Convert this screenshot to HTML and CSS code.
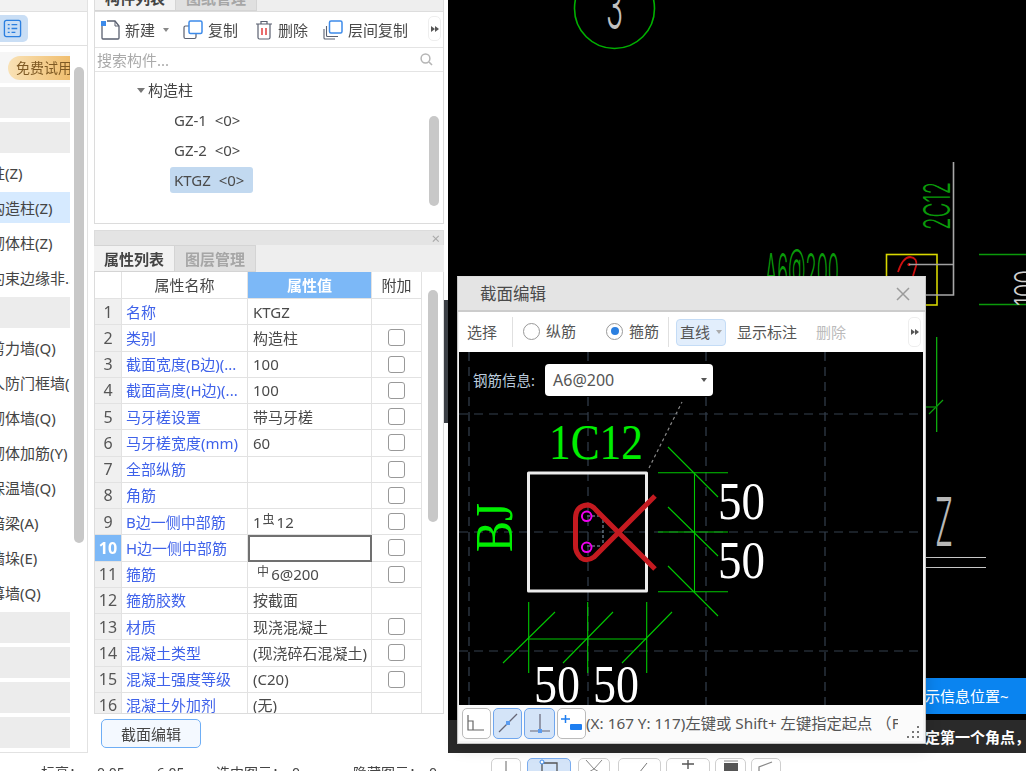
FILE: index.html
```html
<!DOCTYPE html>
<html lang="zh">
<head>
<meta charset="utf-8">
<title>截面编辑</title>
<link rel="stylesheet" href="styles.css">
</head>
<body>
<div class="app">
  <div class="main">
    <aside class="sidebar">
      <div class="side-strip"></div>
      <div class="side-tools">
        <span class="side-toolbtn">
          <svg width="19" height="19" viewBox="0 0 20 20"><rect x="1.5" y="1.5" width="17" height="17" rx="2" fill="none" stroke="#2b7fe0" stroke-width="1.4"/><path d="M5 6h2M9 6h6M5 10h2M9 10h6M5 14h2M9 14h4" stroke="#2b7fe0" stroke-width="1.4"/></svg>
        </span>
      </div>
      <ul class="side-list">
        <li class="side-item"><span class="promo">免费试用</span></li>
        <li class="side-item blank"></li>
        <li class="side-item blank"></li>
        <li class="side-item text"><span>柱(Z)</span></li>
        <li class="side-item text active"><span>构造柱(Z)</span></li>
        <li class="side-item text"><span>砌体柱(Z)</span></li>
        <li class="side-item text"><span>约束边缘非..</span></li>
        <li class="side-item blank"></li>
        <li class="side-item text"><span>剪力墙(Q)</span></li>
        <li class="side-item text"><span>人防门框墙(</span></li>
        <li class="side-item text"><span>砌体墙(Q)</span></li>
        <li class="side-item text"><span>砌体加筋(Y)</span></li>
        <li class="side-item text"><span>保温墙(Q)</span></li>
        <li class="side-item text"><span>暗梁(A)</span></li>
        <li class="side-item text"><span>墙垛(E)</span></li>
        <li class="side-item text"><span>幕墙(Q)</span></li>
        <li class="side-item blank"></li>
        <li class="side-item blank"></li>
        <li class="side-item blank"></li>
        <li class="side-item blank"></li>
      </ul>
      <div class="thumb side-thumb"></div>
    </aside>

    <section class="panels">
      <div class="panel-list">
        <div class="tabs tabs-top">
          <span class="tab current">构件列表</span>
          <span class="tab">图纸管理</span>
        </div>
        <div class="list-tools">
          <span class="tool tool-new">
            <svg width="20" height="20" viewBox="0 0 20 20"><path d="M2 5V18a1 1 0 0 0 1 1H18a1 1 0 0 0 1-1V6L15 1H7" fill="none" stroke="#5a6070" stroke-width="1.3"/><path d="M15 1V6H19" fill="none" stroke="#5a6070" stroke-width="1"/><rect x="1" y="1" width="5" height="5" fill="#3d8bea"/></svg>
            新建<i class="caret"></i>
          </span>
          <span class="tool tool-copy">
            <svg width="20" height="20" viewBox="0 0 20 20"><rect x="1" y="6" width="12" height="12.5" rx="1.5" fill="none" stroke="#5a6070" stroke-width="1.2"/><rect x="6" y="1" width="13" height="12.5" rx="1.5" fill="#fff" stroke="#3d8bea" stroke-width="1.5"/></svg>
            复制
          </span>
          <span class="tool tool-del">
            <svg width="18" height="20" viewBox="0 0 18 20"><path d="M1 4H17M6 4V1.5H12V4" fill="none" stroke="#5a6070" stroke-width="1.2"/><path d="M3 4V17.5a1.5 1.5 0 0 0 1.5 1.5H13.5a1.5 1.5 0 0 0 1.5-1.5V4" fill="none" stroke="#5a6070" stroke-width="1.2"/><path d="M7 8V15M11 8V15" stroke="#e03030" stroke-width="1.4"/></svg>
            删除
          </span>
          <span class="tool tool-floor">
            <svg width="20" height="20" viewBox="0 0 20 20"><path d="M1 9V18a1 1 0 0 0 1 1H12" fill="none" stroke="#5a6070" stroke-width="1.1"/><path d="M3.5 6V15.5a1 1 0 0 0 1 1H15" fill="none" stroke="#5a6070" stroke-width="1.1"/><rect x="6.5" y="1" width="12.5" height="12" rx="1.5" fill="#fff" stroke="#3d8bea" stroke-width="1.5"/></svg>
            层间复制
          </span>
          <span class="more"><i></i><i></i></span>
        </div>
        <div class="search">
          <span>搜索构件...</span>
          <svg width="13" height="13" viewBox="0 0 13 13"><circle cx="5.5" cy="5.5" r="4.4" fill="none" stroke="#b5b5b5" stroke-width="1.5"/><path d="M9 9l3 3" stroke="#b5b5b5" stroke-width="1.6"/></svg>
        </div>
        <div class="tree">
          <div class="tree-root"><i class="caret"></i>构造柱</div>
          <div class="tree-leaf">GZ-1&nbsp; &lt;0&gt;</div>
          <div class="tree-leaf">GZ-2&nbsp; &lt;0&gt;</div>
          <div class="tree-leaf selected">KTGZ&nbsp; &lt;0&gt;</div>
          <div class="thumb tree-thumb"></div>
        </div>
      </div>

      <div class="panel-head"><span class="head-x">×</span></div>
      <div class="tabs tabs-prop">
        <span class="tab current">属性列表</span>
        <span class="tab">图层管理</span>
      </div>
      <div class="prop">
        <div class="grid">
          <div class="c hd num"></div><div class="c hd">属性名称</div><div class="c hd val-hd">属性值</div><div class="c hd">附加</div>

          <div class="c num">1</div><div class="c lbl">名称</div><div class="c val">KTGZ</div><div class="c"></div>
          <div class="c num">2</div><div class="c lbl">类别</div><div class="c val">构造柱</div><div class="c"><i class="chk"></i></div>
          <div class="c num">3</div><div class="c lbl">截面宽度(B边)(...</div><div class="c val">100</div><div class="c"><i class="chk"></i></div>
          <div class="c num">4</div><div class="c lbl">截面高度(H边)(...</div><div class="c val">100</div><div class="c"><i class="chk"></i></div>
          <div class="c num">5</div><div class="c lbl">马牙槎设置</div><div class="c val">带马牙槎</div><div class="c"><i class="chk"></i></div>
          <div class="c num">6</div><div class="c lbl">马牙槎宽度(mm)</div><div class="c val">60</div><div class="c"><i class="chk"></i></div>
          <div class="c num">7</div><div class="c lbl">全部纵筋</div><div class="c val"></div><div class="c"><i class="chk"></i></div>
          <div class="c num">8</div><div class="c lbl">角筋</div><div class="c val"></div><div class="c"><i class="chk"></i></div>
          <div class="c num">9</div><div class="c lbl">B边一侧中部筋</div><div class="c val">1 <span class="steel">虫</span>12</div><div class="c"><i class="chk"></i></div>
          <div class="c num on">10</div><div class="c lbl">H边一侧中部筋</div><div class="c val editing"></div><div class="c"><i class="chk"></i></div>
          <div class="c num">11</div><div class="c lbl">箍筋</div><div class="c val"><span class="steel">&nbsp;中</span>6@200</div><div class="c"><i class="chk"></i></div>
          <div class="c num">12</div><div class="c lbl">箍筋胶数</div><div class="c val">按截面</div><div class="c"></div>
          <div class="c num">13</div><div class="c lbl">材质</div><div class="c val">现浇混凝土</div><div class="c"><i class="chk"></i></div>
          <div class="c num">14</div><div class="c lbl">混凝土类型</div><div class="c val">(现浇碎石混凝土)</div><div class="c"><i class="chk"></i></div>
          <div class="c num">15</div><div class="c lbl">混凝土强度等级</div><div class="c val">(C20)</div><div class="c"><i class="chk"></i></div>
          <div class="c num">16</div><div class="c lbl">混凝土外加剂</div><div class="c val">(无)</div><div class="c"></div>
        </div>
        <div class="thumb prop-thumb"></div>
      </div>
      <div class="prop-foot"><button class="foot-btn">截面编辑</button></div>
    </section>

    <div class="splitter"><span class="grip"></span></div>

    <section class="canvas">
      <svg class="cad" width="578" height="753" viewBox="448 0 578 753">
        <circle cx="614.5" cy="8.5" r="40" fill="none" stroke="#00b000" stroke-width="1.6"/>
        <text class="thin" x="606" y="29" font-size="62" fill="#c0c0c0" textLength="17" lengthAdjust="spacingAndGlyphs">3</text>
        <text class="thin" x="765" y="288" font-size="48" fill="#0a9a0a" textLength="74" lengthAdjust="spacingAndGlyphs">A6@200</text>
        <text class="thin" transform="translate(950 230) rotate(-90)" font-size="37" fill="#0a9a0a" textLength="48" lengthAdjust="spacingAndGlyphs">2C12</text>
        <rect x="886.5" y="254.5" width="50.5" height="50.5" fill="none" stroke="#d8d800" stroke-width="1.6"/>
        <path d="M898 272Q903 257 910 257Q918 258 916 266L913 276" fill="none" stroke="#d01010" stroke-width="1.8"/>
        <circle cx="909" cy="264.5" r="1.6" fill="#e01010"/>
        <path d="M953.5 162V295H925" fill="none" stroke="#a8a8a8" stroke-width="1.6"/>
        <path d="M909 264.5H953" stroke="#a0a0a0" stroke-width="1.4"/>
        <path d="M979 254.5H1026M979 304.5H1026" stroke="#0a9a0a" stroke-width="1.6"/>
        <text class="thin" transform="translate(1036 306) rotate(-90)" font-size="30" fill="#d0d0d0" textLength="36" lengthAdjust="spacingAndGlyphs">100</text>
        <path d="M936.7 337V432" stroke="#10c010" stroke-width="1.2"/>
        <path d="M929 414L943 400" stroke="#0fa00f" stroke-width="1.2"/>
        <path d="M925 407H937" stroke="#0a8a0a" stroke-width="1.4"/>
        <text class="thin" x="935" y="546" font-size="67" fill="#b8b8b8" textLength="18" lengthAdjust="spacingAndGlyphs">Z</text>
        <path d="M925 557.5H986M925 567.5H986" stroke="#c8c8c8" stroke-width="1.2"/>
      </svg>
      <div class="notice">示信息位置~</div>
      <div class="cmdbar">定第一个角点，</div>
    </section>
  </div>

  <footer class="status">
    <span class="st st1">标高：</span><span class="st st2">0.05</span><span class="st st3">~ 6.05</span>
    <span class="st st4">选中图元：</span><span class="st st5">0</span>
    <span class="st st6">隐藏图元：</span><span class="st st7">0</span>
    <span class="sb sb1"><svg width="28" height="14" viewBox="0 0 28 14"><path d="M14 2V14" stroke="#666"/></svg></span>
    <span class="sb sb2 on"><svg width="28" height="14" viewBox="0 0 28 14"><path d="M7 4H22V14M7 4V14" fill="none" stroke="#555" stroke-width="1.3"/><circle cx="7" cy="3" r="2" fill="#fff" stroke="#3d8bea"/></svg></span>
    <span class="sb sb3"><svg width="30" height="14" viewBox="0 0 30 14"><path d="M7 1L15 10L23 1M15 10L8 14M15 10L22 14" fill="none" stroke="#888"/></svg></span>
    <span class="sb sb4"><svg width="30" height="14" viewBox="0 0 30 14"><path d="M14 14L22 4" stroke="#777"/></svg></span>
    <span class="sb sb5"><svg width="30" height="14" viewBox="0 0 30 14"><path d="M9 5H21M15 1V10" stroke="#555" stroke-width="1.4"/></svg></span>
    <span class="sb sb6"><svg width="28" height="14" viewBox="0 0 28 14"><rect x="7" y="4" width="14" height="10" fill="#555"/><path d="M7 2H21" stroke="#888"/></svg></span>
    <span class="sb sb7"><svg width="28" height="14" viewBox="0 0 28 14"><path d="M7 14V8L20 3" fill="none" stroke="#888" stroke-width="1.3"/></svg></span>
  </footer>

  <div class="dialog">
    <div class="dlg-title"><span>截面编辑</span>
      <svg width="14" height="14" viewBox="0 0 14 14"><path d="M1 1L13 13M13 1L1 13" stroke="#9a9a9a" stroke-width="1.5"/></svg>
    </div>
    <div class="dlg-tools">
      <span class="dt-select">选择</span><i class="dsep s1"></i>
      <label class="radio r1"><i class="dot"></i>纵筋</label>
      <label class="radio r2"><i class="dot on"></i>箍筋</label><i class="dsep s2"></i>
      <span class="dt-line">直线<i class="caret"></i></span>
      <span class="dt-show">显示标注</span>
      <span class="dt-del">删除</span>
      <span class="more dt-more"><i></i><i></i></span>
    </div>
    <div class="dlg-canvas">
      <svg width="464" height="353" viewBox="459 352 464 353">
        <g stroke="#34404e" stroke-width="1.2" stroke-dasharray="9 6" fill="none">
          <path d="M459 414H923M459 532H923M459 651H923"/>
          <path d="M469 352V705M588 352V705M706 352V705M825 352V705"/>
        </g>
        <path d="M649 468L682 402" stroke="#888" stroke-width="1.2" stroke-dasharray="3 3"/>
        <text class="serif" x="549" y="459" font-size="51" fill="#00ee00" textLength="94" lengthAdjust="spacingAndGlyphs">1C12</text>
        <text class="serif" transform="translate(512 552) rotate(-90)" font-size="52" fill="#00ee00" textLength="49" lengthAdjust="spacingAndGlyphs">BJ</text>
        <rect x="528.5" y="473" width="118" height="118" fill="none" stroke="#ececec" stroke-width="3" stroke-linejoin="round"/>
        <path d="M603 520V543M587 516H603M587 546H603" stroke="#8fa4b8" stroke-width="1" stroke-dasharray="3 2"/>
        <path d="M655 496L594 557Q587 562 581 558Q575 552 575.5 545V518Q576 506 587 505Q592 505 596 510L655 569" fill="none" stroke="#c41a20" stroke-width="5"/>
        <g fill="none" stroke="#f000f0" stroke-width="2">
          <circle cx="586.7" cy="516.3" r="4.8"/>
          <circle cx="586.7" cy="547.3" r="4.8"/>
        </g>
        <g stroke="#00c800" stroke-width="1.1">
          <path d="M694.5 473V592M658 472.7H728M658 532H728M658 591.7H728"/>
          <path d="M668 447L718 497M668 507L718 556M668 566L718 616"/>
          <path d="M528.7 602V673M587.7 602V673M646.7 602V673M528 639H647"/>
          <path d="M555 612L503 663M613 612L563 663M672 612L622 663"/>
        </g>
        <g class="serif" font-size="52" fill="#fff">
          <text x="718" y="519" textLength="47" lengthAdjust="spacingAndGlyphs">50</text>
          <text x="718" y="578" textLength="47" lengthAdjust="spacingAndGlyphs">50</text>
          <text x="534" y="702" textLength="46" lengthAdjust="spacingAndGlyphs">50</text>
          <text x="593" y="702" textLength="46" lengthAdjust="spacingAndGlyphs">50</text>
        </g>
      </svg>
      <div class="rebar">
        <span class="rebar-lbl">钢筋信息:</span>
        <span class="rebar-sel">A6@200<i class="caret"></i></span>
      </div>
    </div>
    <div class="dlg-foot">
      <span class="fb"><svg width="22" height="18" viewBox="0 0 22 18"><path d="M2 1V16H18M2 7H7V16" fill="none" stroke="#666" stroke-width="1.2"/></svg></span>
      <span class="fb on"><svg width="22" height="22" viewBox="0 0 22 22"><path d="M2 20L20 2" stroke="#667" stroke-width="1.2"/><rect x="9" y="9" width="4" height="4" fill="#5b9cf0"/></svg></span>
      <span class="fb on wide"><svg width="22" height="20" viewBox="0 0 22 20"><path d="M11 1V18M1 18H21" stroke="#667" stroke-width="1.2"/><rect x="9" y="16" width="4" height="4" fill="#5b9cf0"/></svg></span>
      <span class="fb"><svg width="24" height="20" viewBox="0 0 24 20"><path d="M1 6H10M5.5 2V10" stroke="#1e7ef0" stroke-width="1.5"/><rect x="10" y="11" width="12" height="6" rx="1" fill="#1e7ef0"/></svg></span>
      <span class="foot-text">(X: 167 Y: 117)左键或 Shift+ 左键指定起点 （F</span>
      <svg class="size-grip" width="12" height="12" viewBox="0 0 12 12"><g fill="#777"><rect x="10" y="0" width="2" height="2"/><rect x="10" y="5" width="2" height="2"/><rect x="5" y="5" width="2" height="2"/><rect x="10" y="10" width="2" height="2"/><rect x="5" y="10" width="2" height="2"/><rect x="0" y="10" width="2" height="2"/></g></svg>
    </div>
  </div>
</div>
</body>
</html>
```

FILE: styles.css
```css
* { box-sizing: border-box; }
html, body { margin: 0; padding: 0; }
body {
  width: 1026px;
  height: 771px;
  overflow: hidden;
  background: #fff;
  color: #444;
  font: 15px/20px "Noto Sans", "Noto Sans CJK SC", sans-serif;
}
ul { list-style: none; margin: 0; padding: 0; }
i { font-style: normal; }

.app { position: relative; width: 1026px; height: 771px; overflow: hidden; filter: blur(0.35px); }
.main { display: flex; height: 753px; }

/* sidebar */
.sidebar { position: relative; width: 88px; flex: none; border-right: 1px solid #e2e2e2; border-bottom: 1px solid #e2e2e2; background: #fff; }
.side-strip { height: 12px; background: #f2f2f2; border-bottom: 1px solid #e0e0e0; }
.side-tools { height: 34px; border-bottom: 1px solid #e0e0e0; display: flex; align-items: center; }
.side-toolbtn { width: 28px; height: 27px; background: #c9def5; border-radius: 0 5px 5px 0; display: flex; align-items: center; justify-content: flex-end; padding-right: 6px; }
.side-list { padding-top: 6px; display: flex; flex-direction: column; gap: 4px; width: 70px; }
.side-item { height: 31px; overflow: hidden; display: flex; align-items: center; white-space: nowrap; }
.side-item.blank { background: #ececec; }
.side-item.text span { margin-left: -10px; }
.side-item.active { background: #d6eaff; }
.side-item:first-child { background: #f6f6f6; align-items: center; padding-left: 8px; }
.promo { flex: none; width: 70px; height: 24px; padding-left: 8px; font-size: 14px; line-height: 24px; color: #7f5a24; background: linear-gradient(90deg, #f9e2b6, #efb965); border-radius: 12px 0 0 12px; }
.thumb { position: absolute; background: #c8c8c8; border-radius: 5px; width: 10px; }
.side-thumb { left: 74px; top: 67px; height: 476px; }

/* panels */
.panels { width: 350px; margin-left: 6px; flex: none; display: flex; flex-direction: column; }
.panel-list { height: 224px; border: 1px solid #dcdcdc; border-top: 0; display: flex; flex-direction: column; overflow: hidden; }
.tabs { display: flex; background: #eee; flex: none; }
.tabs-top { height: 12px; overflow: hidden; align-items: flex-end; border-bottom: 1px solid #ddd; }
.tabs-top .tab { margin-top: -15px; }
.tab { width: 81px; height: 27px; flex: none; display: flex; align-items: center; justify-content: center; font-weight: 700; color: #a6a6a6; background: #e0e0e0; border: 1px solid #d4d4d4; border-left: 0; font-size: 15px; }
.tab.current { color: #444; background: #f2f2f2; border-right: 1px solid #d4d4d4; }

.list-tools { height: 35px; flex: none; display: flex; align-items: center; position: relative; }
.tool { display: flex; align-items: center; flex: none; gap: 5px; color: #4a4a4a; }
.tool-new { margin-left: 5px; width: 83px; }
.tool-copy { width: 72px; }
.tool-del { width: 68px; }
.caret { display: inline-block; width: 0; height: 0; border-left: 3.5px solid transparent; border-right: 3.5px solid transparent; border-top: 4px solid #888; }
.tool-new .caret { margin-left: 3px; }
.more { position: absolute; right: 2px; top: 4px; width: 13px; height: 25px; border: 1px solid #eee; border-radius: 5px; background: #fff; display: flex; align-items: center; justify-content: center; }
.more i { width: 0; height: 0; border-top: 3px solid transparent; border-bottom: 3px solid transparent; border-left: 4px solid #555; }
.search { height: 25px; flex: none; border-top: 1px solid #e4e4e4; border-bottom: 1px solid #e4e4e4; display: flex; align-items: center; justify-content: space-between; padding: 0 10px 0 2px; color: #aaa; }
.tree { position: relative; flex: 1; padding-top: 3px; }
.tree-root { height: 30px; display: flex; align-items: center; padding-left: 42px; gap: 3px; }
.tree-root .caret { border-top-color: #777; border-left-width: 4px; border-right-width: 4px; border-top-width: 5px; }
.tree-leaf { height: 30px; display: flex; align-items: center; padding-left: 79px; color: #4a4a4a; font-size: 15px; }
.tree-leaf.selected { width: 83px; height: 26px; margin: 2px 0 0 75px; padding-left: 4px; background: #c2d9f0; border-radius: 3px; white-space: nowrap; }
.tree-thumb { left: 334px; top: 44px; height: 90px; }

.panel-head { height: 15px; margin-top: 6px; background: #e4e4e4; flex: none; position: relative; border: 1px solid #dcdcdc; border-bottom: 0; }
.head-x { position: absolute; right: 3px; top: -3px; font-size: 15px; color: #aaa; }
.tabs-prop { height: 27px; }
.prop { position: relative; height: 442px; flex: none; overflow: hidden; border-left: 1px solid #dcdcdc; border-right: 1px solid #dcdcdc; border-bottom: 1px solid #dcdcdc; }
.grid { display: grid; width: 328px; grid-template-columns: 27px 126px 124px 50px; grid-template-rows: 27px; grid-auto-rows: 26.25px; }
.c { border-right: 1px solid #e2e2e2; border-bottom: 1px solid #e2e2e2; display: flex; align-items: center; justify-content: center; white-space: nowrap; overflow: hidden; min-width: 0; font-size: 15px; }
.num { background: #f0f0f0; font-size: 16px; color: #555; }
.hd { background: #fff; color: #444; }
.hd.num { background: #fff; }
.val-hd { background: #7cb8f7; color: #fff; font-weight: 700; }
.lbl { justify-content: flex-start; padding-left: 4px; color: #3f62ea; }
.val { justify-content: flex-start; padding-left: 5px; color: #4a4a4a; }
.num.on { background: #7cb8f7; color: #fff; font-weight: 700; }
.editing { border: 2px solid #707070; }
.steel { font-size: 12px; position: relative; top: -2px; margin: 0 2px 0 1px; }
.chk { width: 17px; height: 17px; border: 1px solid #999; border-radius: 3px; background: #fff; }
.prop-thumb { left: 333px; top: 18px; height: 232px; }
.prop-foot { flex: 1; padding: 5px 0 0 7px; }
.foot-btn { width: 100px; height: 29px; padding: 0; background: #f4f9ff; border: 1px solid #6eaef5; border-radius: 5px; font: inherit; color: #444; }

/* splitter and canvas */
.splitter { width: 4px; flex: none; position: relative; }
.grip { position: absolute; left: 0; top: 300px; width: 4px; height: 123px; background: #3c4046; }
.canvas { position: relative; flex: 1; background: #000; overflow: hidden; }
.cad { position: absolute; left: 0; top: 0; }
.thin { font-family: "Inter", "Liberation Sans", sans-serif; font-weight: 300; }
.serif { font-family: "Liberation Serif", serif; }
.notice { position: absolute; right: 0; top: 678px; width: 130px; height: 36px; background: #0a84f0; color: #fff; padding-left: 29px; line-height: 36px; white-space: nowrap; }
.cmdbar { position: absolute; left: 0; right: 0; top: 720px; height: 33px; background: #2a2a2a; color: #fff; font-weight: 700; padding-left: 477px; line-height: 34px; white-space: nowrap; overflow: hidden; }

/* status bar */
.status { position: relative; height: 18px; background: #fff; display: flex; font-size: 14px; color: #444; overflow: hidden; }
.st { flex: none; padding-top: 10px; line-height: 20px; white-space: nowrap; }
.st1 { margin-left: 41px; width: 56px; }
.st2 { width: 48px; }
.st3 { width: 71px; }
.st4 { width: 76px; }
.st5 { width: 61px; }
.st6 { width: 76px; }
.st7 { width: 62px; }
.sb { flex: none; height: 24px; margin-top: 5px; border: 1px solid #cfcfcf; border-radius: 5px; background: #fff; display: flex; justify-content: center; }
.sb svg { flex: none; }
.sb.on { background: #d4e4f8; border-color: #7aacee; }
.sb1 { width: 30px; }
.sb2 { width: 44px; margin-left: 6px; }
.sb3 { width: 32px; margin-left: 7px; }
.sb4 { width: 43px; margin-left: 8px; }
.sb5 { width: 44px; margin-left: 5px; }
.sb6 { width: 31px; margin-left: 5px; }
.sb7 { width: 30px; margin-left: 5px; }

/* dialog window */
.dialog { position: absolute; left: 457px; top: 276px; width: 469px; height: 468px; background: #f4f4f4; border: 1px solid #c4c4c4; border-top-color: #ddd; display: flex; flex-direction: column; padding: 0 2px 2px 1px; box-shadow: 0 4px 14px rgba(0,0,0,.18); }
.dlg-title { height: 35px; margin: 0 -2px 0 -1px; padding: 0 15px 0 22px; background: #e4e4e4; flex: none; display: flex; align-items: center; justify-content: space-between; font-size: 16.5px; color: #4a4a4a; border-bottom: 2px solid #ccc; }
.dlg-tools { height: 40px; flex: none; position: relative; display: flex; align-items: center; background: #fff; color: #555; }
.dsep { width: 1px; height: 30px; background: #e0e0e0; flex: none; }
.dt-select { margin-left: 8px; width: 45px; flex: none; }
.radio { display: flex; align-items: center; gap: 6px; flex: none; font-size: 15px; margin-top: -2px; }
.r1 { margin-left: 10px; width: 83px; }
.r2 { width: 60px; }
.s2 { margin-left: 2px; }
.dot { width: 17px; height: 17px; border: 1px solid #999; border-radius: 50%; background: #fff; flex: none; position: relative; }
.dot.on::after { content: ""; position: absolute; left: 3.5px; top: 3.5px; width: 8px; height: 8px; border-radius: 50%; background: #2b7fe0; }
.dt-line { margin-left: 7px; width: 50px; height: 27px; flex: none; display: flex; align-items: center; gap: 6px; padding-left: 3px; background: #e2eefc; border: 1px solid #c4dcf6; border-radius: 4px; }
.dt-line .caret { border-top-color: #aaa; }
.dt-show { margin-left: 11px; width: 79px; flex: none; }
.dt-del { color: #bbb; flex: none; }
.dt-more { right: 2px; top: 5px; height: 30px; width: 13px; }
.dlg-canvas { position: relative; height: 353px; flex: none; background: #000; overflow: hidden; }
.dlg-canvas svg { display: block; }
.rebar { position: absolute; left: 14px; top: 12px; display: flex; align-items: center; gap: 8px; }
.rebar-lbl { color: #bcd; font-size: 14.5px; width: 64px; white-space: nowrap; }
.rebar-sel { width: 168px; height: 32px; padding: 0 8px; background: #fff; border-radius: 4px; display: flex; align-items: center; justify-content: space-between; color: #555; font-size: 16px; }
.rebar-sel .caret { border-top-color: #555; margin-right: -2px; }
.dlg-foot { flex: 1; background: #fbfbfb; display: flex; align-items: center; padding-left: 3px; position: relative; gap: 2px; }
.fb { width: 29px; height: 31px; flex: none; border: 1px solid #bbb; border-radius: 5px; background: #fff; display: flex; align-items: center; justify-content: center; }
.fb.on { background: #d4e4f8; border-color: #6fa6ee; }
.fb.wide { width: 31px; }
.foot-text { width: 312px; margin-left: -2px; font-size: 15.3px; white-space: nowrap; overflow: hidden; color: #555; }
.size-grip { position: absolute; right: 4px; bottom: 3px; }
```
